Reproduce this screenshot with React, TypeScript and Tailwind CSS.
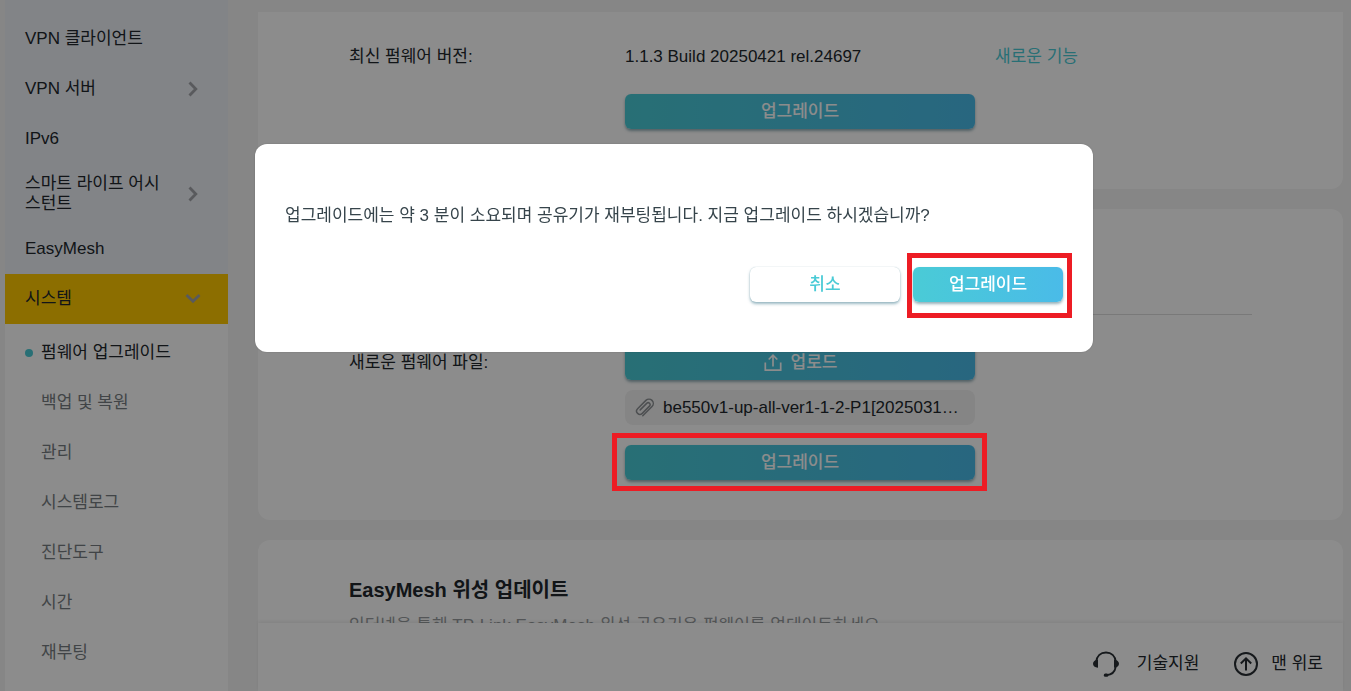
import { useState } from 'react'

interface MenuItem {
  label: string
  hasChildren?: boolean
}

const menu: MenuItem[] = [
  { label: 'VPN 클라이언트' },
  { label: 'VPN 서버', hasChildren: true },
  { label: 'IPv6' },
  { label: '스마트 라이프 어시스턴트', hasChildren: true },
  { label: 'EasyMesh' },
]

const systemMenu = ['펌웨어 업그레이드', '백업 및 복원', '관리', '시스템로그', '진단도구', '시간', '재부팅']

const primary =
  'h-[35px] rounded-md bg-linear-to-r from-[#4acbd6] to-[#4abbe8] text-white font-medium shadow-[0_2px_3px_rgba(20,80,100,0.45)] cursor-pointer'

function Chevron({ down = false }: { down?: boolean }) {
  return (
    <svg className="size-6 shrink-0" viewBox="0 0 24 24" fill="none" stroke="#a2a5a9" strokeWidth="2.8">
      <path d={down ? 'M5.500 8l6.500 6.200L18.500 8' : 'M8.500 5.500l6.300 6.500-6.300 6.500'} />
    </svg>
  )
}

function UploadIcon() {
  return (
    <svg className="size-5" viewBox="0 0 20 20" fill="none" stroke="currentColor" strokeWidth="1.7">
      <path d="M2.300 9.500v7.700h15.400V9.500M10 13.500V2.500M5.700 6.500L10 2.200l4.300 4.300" />
    </svg>
  )
}

function ClipIcon() {
  return (
    <svg className="size-5 shrink-0" viewBox="0 0 20 20" fill="none" stroke="#8d9194" strokeWidth="1.5" strokeLinecap="round">
      <path d="M7.800 17.800l9.200-9.300a4.300 4.300 0 0 0-6.100-6.100L2.600 10.700a3.300 3.300 0 0 0 4.700 4.700l7.400-7.500a2 2 0 0 0-2.800-2.800L5.200 11.900" />
    </svg>
  )
}

function HeadsetIcon() {
  return (
    <svg className="size-[26px]" viewBox="0 0 26 26" fill="none" stroke="#282e33" strokeWidth="1.8">
      <path d="M3.200 11C3.700 5 7.700 1.500 13 1.500S22.300 5 22.800 11v4.500c-.8 5-4 8.300-9.300 8.700" />
      <path d="M5 8.800v7.900c-3.200 0-5-1.700-5-3.900s1.800-4 5-4zM21 8.800v7.900c3.200 0 5-1.700 5-3.900s-1.800-4-5-4z" fill="#282e33" stroke="none" />
      <rect x="10.800" y="22.600" width="4.600" height="3.200" rx="1.500" fill="#282e33" stroke="none" />
    </svg>
  )
}

function TopIcon() {
  return (
    <svg className="size-[26px]" viewBox="0 0 26 26" fill="none" stroke="#282e33" strokeWidth="2">
      <circle cx="13" cy="13" r="11" />
      <path d="M13 19.500V7.500M7.800 12.500L13 7.300l5.200 5.200" />
    </svg>
  )
}

function Sidebar() {
  return (
    <nav className="w-[223px] shrink-0 bg-white overflow-hidden">
      <div className="bg-[#edf0f6] pt-3.5">
        {menu.map(item => (
          <a key={item.label} href="#" className="flex items-center justify-between gap-3 min-h-[50px] py-2.5 pl-5 pr-[23px] leading-5">
            <span>{item.label}</span>
            {item.hasChildren && <Chevron />}
          </a>
        ))}
      </div>
      <a href="#" className="flex items-center justify-between h-[50px] pl-5 pr-[23px] bg-[#ffc800]">
        <span>시스템</span>
        <Chevron down />
      </a>
      <ul className="pt-1">
        {systemMenu.map((label, i) => (
          <li key={label}>
            <a href="#" className={i === 0 ? 'flex items-center gap-2 h-[50px] pl-5' : 'flex items-center gap-2 h-[50px] pl-5 text-[#777d81]'}>
              <span className={i === 0 ? 'size-2 rounded-full bg-[#4acbd6]' : 'size-2'} />
              {label}
            </a>
          </li>
        ))}
      </ul>
    </nav>
  )
}

export default function App() {
  const [open, setOpen] = useState(true)

  return (
    <div className="flex gap-[30px] h-screen overflow-hidden pl-[5px] pr-2 bg-[#f4f4f4] text-[17px] text-[#21272c] font-['Liberation_Sans','Noto_Sans_CJK_KR',sans-serif]">
      <Sidebar />

      <main className="flex-1 min-w-0 flex flex-col">
        <div className="flex-1 min-h-0 overflow-hidden pt-3 flex flex-col gap-5">
          {/* Online upgrade */}
          <section className="shrink-0 bg-white rounded-b-xl px-[91px] pt-8 pb-[60px]">
            <div className="flex items-center h-[26px]">
              <div className="w-[276px]">최신 펌웨어 버전:</div>
              <div className="w-[350px]">1.1.3 Build 20250421 rel.24697</div>
              <a href="#" className="ml-5 text-[#4acbd6]">새로운 기능</a>
            </div>
            <button className={`${primary} block w-[350px] mt-6 ml-[276px]`} onClick={() => setOpen(true)}>
              업그레이드
            </button>
          </section>

          {/* Manual upgrade */}
          <section className="shrink-0 bg-white rounded-xl px-[91px] pb-10">
            <div className="h-[106px] border-b border-[#dcdcdc]" />
            <div className="flex pt-[30px]">
              <label htmlFor="firmware" className="w-[276px] leading-[35px]">새로운 펌웨어 파일:</label>
              <div className="w-[350px] flex flex-col">
                <button id="firmware" className={`${primary} flex items-center justify-center gap-2`}>
                  <UploadIcon />
                  업로드
                </button>
                <div className="flex items-center gap-2 h-[35px] mt-2.5 mb-5 pl-2.5 pr-3.5 rounded-lg bg-[#f3f3f3]">
                  <ClipIcon />
                  <span className="truncate">be550v1-up-all-ver1-1-2-P1[20250317-rel60217].bin</span>
                </div>
                <div className="relative">
                  <button className={`${primary} block w-full`} onClick={() => setOpen(true)}>
                    업그레이드
                  </button>
                  <div className="absolute -top-3 -bottom-[11px] -left-[13px] -right-3 z-30 border-5 border-[#ed1c24] pointer-events-none" />
                </div>
              </div>
            </div>
          </section>

          {/* Satellite update */}
          <section className="shrink-0 bg-white rounded-t-xl px-[91px] pt-9 pb-10">
            <h2 className="text-xl leading-7 font-bold">EasyMesh 위성 업데이트</h2>
            <p className="mt-2.5 leading-6 text-[#999da0]">
              인터넷을 통해 TP-Link EasyMesh 위성 공유기용 펌웨어를 업데이트하세요.
            </p>
          </section>
        </div>

        <footer className="h-[68px] shrink-0 flex items-center justify-end gap-[34px] pt-3.5 pr-5 bg-white shadow-[0_-2px_3px_rgba(0,0,0,0.06)]">
          <a href="#" className="flex items-center gap-[18px]">
            <HeadsetIcon />
            기술지원
          </a>
          <a href="#" className="flex items-center gap-3">
            <TopIcon />
            맨 위로
          </a>
        </footer>
      </main>

      {open && (
        <div className="fixed inset-0 z-20 flex items-start justify-center pt-36 pr-[3px] bg-black/45">
          <div role="dialog" aria-modal="true" className="w-[838px] max-w-full px-[30px] pt-15 pb-[50px] rounded-xl bg-white shadow-[0_0_2px_rgba(0,0,0,0.2)]">
            <p className="leading-6 text-[#36444b]">
              업그레이드에는 약 3 분이 소요되며 공유기가 재부팅됩니다. 지금 업그레이드 하시겠습니까?
            </p>
            <div className="flex justify-end gap-[13px] mt-[39px]">
              <button
                onClick={() => setOpen(false)}
                className="w-[150px] h-[35px] rounded-md bg-white text-[#4acbd6] font-medium shadow-[0_0_1px_rgba(60,120,140,0.4),0_2px_3px_rgba(60,120,140,0.5)] cursor-pointer">
                취소
              </button>
              <div className="relative">
                <button className={`${primary} w-[150px]`} onClick={() => setOpen(false)}>
                  업그레이드
                </button>
                <div className="absolute -top-3.5 -bottom-4 -left-1.5 -right-[9px] border-5 border-[#ed1c24] pointer-events-none" />
              </div>
            </div>
          </div>
        </div>
      )}
    </div>
  )
}
